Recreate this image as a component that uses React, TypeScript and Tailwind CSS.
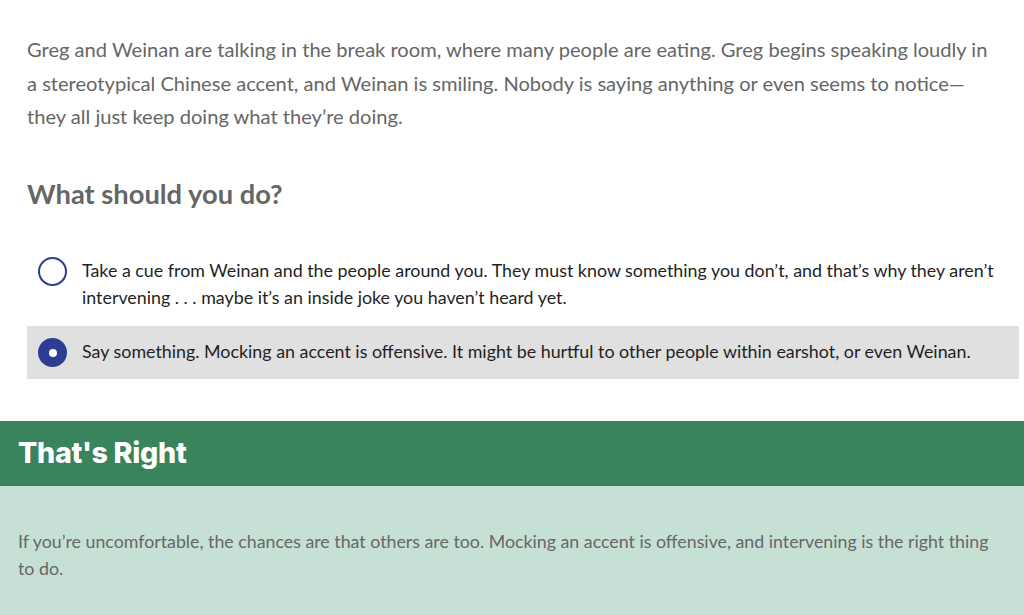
import React from "react";

function Radio({ checked }: { checked: boolean }) {
  return checked ? (
    <span className="flex h-[29px] w-[29px] shrink-0 items-center justify-center rounded-full bg-[#2c3e91]">
      <span className="h-[8px] w-[8px] rounded-full bg-white" />
    </span>
  ) : (
    <span className="h-[29px] w-[29px] shrink-0 rounded-full border-2 border-[#2c3e91] bg-white" />
  );
}

export default function App() {
  return (
    <div className="min-h-[615px] w-[1024px] overflow-hidden bg-white font-['Lato',sans-serif]">
      <div className="pl-[27px] pr-[5px] pt-[33px]">
        <p className="text-[20.1px] leading-[33.5px] text-[#666666] whitespace-nowrap">
          <span className="block">Greg and Weinan are talking in the break room, where many people are eating. Greg begins speaking loudly in</span>
          <span className="block">a stereotypical Chinese accent, and Weinan is smiling. Nobody is saying anything or even seems to notice—</span>
          <span className="block">they all just keep doing what they’re doing.</span>
        </p>
        <h2 className="mt-[42px] text-[27.3px] font-bold leading-[36px] text-[#666666]">What should you do?</h2>
        <div className="mt-[33px] flex flex-col gap-[2px]">
          <div className="flex items-start gap-[15px] py-[12.5px] pl-[11px] pr-[10px]">
            <Radio checked={false} />
            <p className="text-[17.85px] leading-[27px] text-[#1f1f1f] whitespace-nowrap">
              <span className="block">Take a cue from Weinan and the people around you. They must know something you don’t, and that’s why they aren’t</span>
              <span className="block">intervening . . . maybe it’s an inside joke you haven’t heard yet.</span>
            </p>
          </div>
          <div className="flex items-start gap-[15px] bg-[#e0e0e0] pt-[12.5px] pb-[12px] pl-[11px] pr-[10px]">
            <Radio checked={true} />
            <p className="text-[17.85px] leading-[27px] text-[#1f1f1f] whitespace-nowrap">
              Say something. Mocking an accent is offensive. It might be hurtful to other people within earshot, or even Weinan.
            </p>
          </div>
        </div>
      </div>
      <div className="mt-[42px]">
        <div className="flex h-[65px] items-center bg-[#39845c] px-[18px]">
          <h3 className="text-[28.6px] font-extrabold tracking-[-0.3px] text-white" style={{ fontFamily: "Inter, sans-serif" }}>That's Right</h3>
        </div>
        <div className="min-h-[129px] bg-[#c6e0d5] px-[18px] pt-[42px] pb-[20px]">
          <p className="text-[17.8px] leading-[27px] text-[#666666] whitespace-nowrap">
            <span className="block">If you’re uncomfortable, the chances are that others are too. Mocking an accent is offensive, and intervening is the right thing</span>
            <span className="block">to do.</span>
          </p>
        </div>
      </div>
    </div>
  );
}
